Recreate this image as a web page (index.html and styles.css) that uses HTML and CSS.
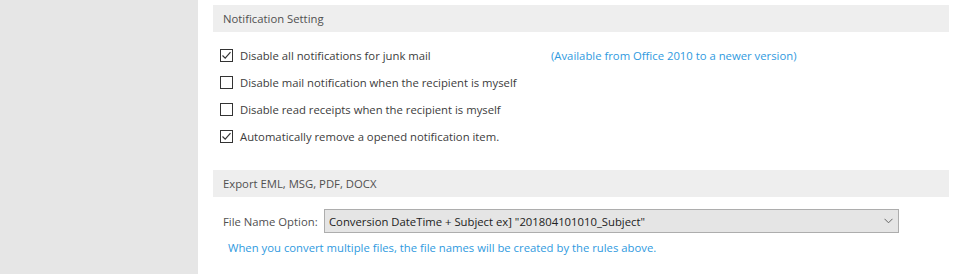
FILE: index.html
```html
<!DOCTYPE html>
<html lang="en">
<head>
    <meta charset="UTF-8">
    <title>Settings</title>
    <link rel="stylesheet" href="styles.css">
</head>
<body>
    <div class="page">
        <div class="sidebar"></div>
        <div class="content">
            <div class="section-title">Notification Setting</div>
            <div class="options">
                <div class="option">
                    <label class="option-main">
                        <span class="box checked">
                            <svg width="11" height="11" viewBox="0 0 11 11"><path d="M1.5 5.5 L4.2 8.2 L9.5 2.2" fill="none" stroke="#333" stroke-width="1.2"/></svg>
                        </span>
                        Disable all notifications for junk mail
                    </label>
                    <span class="note">(Available from Office 2010 to a newer version)</span>
                </div>
                <div class="option">
                    <label class="option-main"><span class="box"></span>Disable mail notification when the recipient is myself</label>
                </div>
                <div class="option">
                    <label class="option-main"><span class="box"></span>Disable read receipts when the recipient is myself</label>
                </div>
                <div class="option">
                    <label class="option-main">
                        <span class="box checked">
                            <svg width="11" height="11" viewBox="0 0 11 11"><path d="M1.5 5.5 L4.2 8.2 L9.5 2.2" fill="none" stroke="#333" stroke-width="1.2"/></svg>
                        </span>
                        Automatically remove a opened notification item.
                    </label>
                </div>
            </div>

            <div class="section-title">Export EML, MSG, PDF, DOCX</div>
            <div class="export">
                <div class="file-row">
                    <span class="file-label">File Name Option:</span>
                    <div class="select">
                        <span>Conversion DateTime + Subject ex] "201804101010_Subject"</span>
                        <svg width="9" height="6" viewBox="0 0 9 6"><path d="M0.5 0.8 L4.5 4.8 L8.5 0.8" fill="none" stroke="#666" stroke-width="1"/></svg>
                    </div>
                </div>
                <p class="hint">When you convert multiple files, the file names will be created by the rules above.</p>
            </div>
        </div>
    </div>
</body>
</html>
```

FILE: styles.css
```css
* {
    margin: 0;
    padding: 0;
    box-sizing: border-box;
}

body {
    font-family: "Open Sans", "Noto Sans", sans-serif;
    font-size: 11.3px;
    color: #3c3c3c;
    background: #fff;
}

.page {
    display: flex;
    height: 274px;
}

.sidebar {
    width: 198px;
    background-color: #e6e6e6;
}

.content {
    flex: 1;
    padding: 5px 9px 0 15px;
}

.section-title {
    height: 27px;
    line-height: 27px;
    padding-left: 10px;
    background-color: #eeeeee;
    color: #505050;
}

.options {
    padding: 10px 0 20px 7px;
}

.option {
    display: flex;
    align-items: center;
    height: 27px;
}

.option-main {
    display: flex;
    align-items: center;
    flex: 0 0 331px;
}

.box {
    width: 13px;
    height: 13px;
    border: 1px solid #333;
    background: #fff;
    margin-right: 7px;
    display: flex;
    align-items: center;
    justify-content: center;
}

.note {
    color: #2f9ae0;
}

.export {
    padding: 12px 0 0 10px;
}

.file-row {
    display: flex;
    align-items: center;
}

.file-label {
    width: 101px;
    color: #505050;
}

.select {
    width: 575px;
    height: 24px;
    border: 1px solid #adadad;
    background-color: #e5e5e5;
    display: flex;
    align-items: center;
    justify-content: space-between;
    padding: 0 5px 0 4px;
    color: #222;
}

.hint {
    color: #2f9ae0;
    margin: 7px 0 0 5px;
}
```
